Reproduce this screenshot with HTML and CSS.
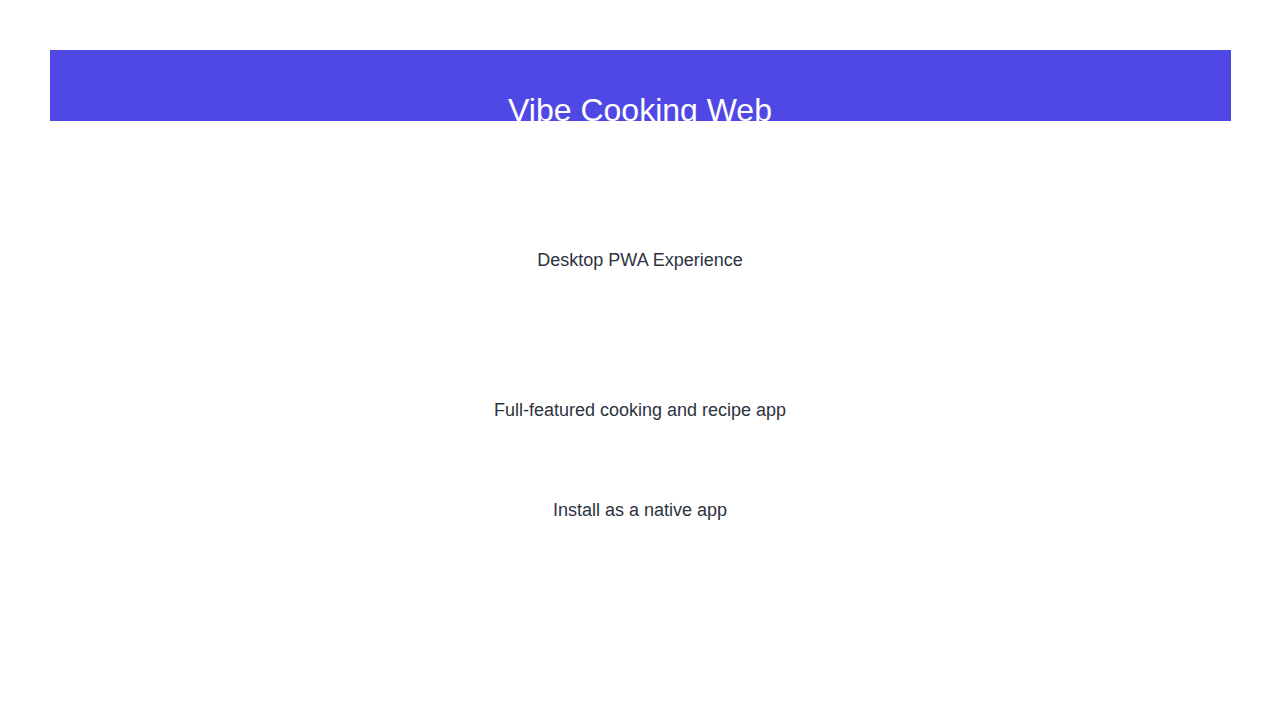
FILE: index.html
```html
<!DOCTYPE html>
<html lang="en">
<head>
<meta charset="utf-8">
<title>Vibe Cooking Web</title>
<link rel="stylesheet" href="styles.css">
</head>
<body>
<div class="page">
  <header class="banner">
    <h1 class="title">Vibe Cooking Web</h1>
  </header>
  <main class="content">
    <p class="line line-first">Desktop PWA Experience</p>
    <p class="line line-second">Full-featured cooking and recipe app</p>
    <p class="line line-third">Install as a native app</p>
  </main>
</div>
</body>
</html>
```

FILE: styles.css
```css
html, body {
  margin: 0;
  padding: 0;
  background: #ffffff;
}

.page {
  padding: 50px;
  font-family: "Liberation Sans", Arial, sans-serif;
}

.banner {
  box-sizing: border-box;
  height: 71px;
  margin-right: -1px;
  padding-top: 42px;
  padding-right: 1px;
  background: #5048e5;
  text-align: center;
}

.title {
  margin: 0;
  font-size: 32px;
  font-weight: 400;
  line-height: 36px;
  color: #ffffff;
}

.content {
  display: flex;
  flex-direction: column;
  align-items: center;
  padding-top: 129px;
}

.line {
  margin: 0;
  font-size: 18px;
  line-height: 21px;
  color: #2d3340;
}

.line-second {
  margin-top: 129px;
}

.line-third {
  margin-top: 79px;
}
```
